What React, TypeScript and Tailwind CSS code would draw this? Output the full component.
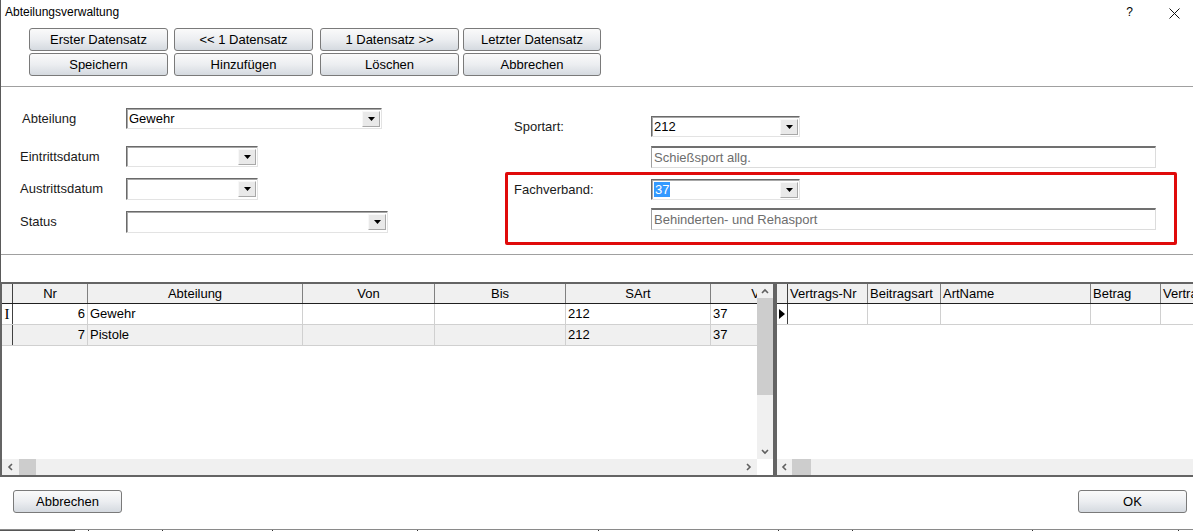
import React from "react";

function Btn({ children, className = "" }: { children: React.ReactNode; className?: string }) {
  return (
    <div
      className={`h-[23px] shrink-0 flex items-center justify-center border border-[#7a7a7a] rounded-[3px] bg-linear-to-b from-[#fafafa] via-[#eceef1] to-[#d5dae0] text-[13px] text-black ${className}`}
    >
      {children}
    </div>
  );
}

function Tri() {
  return (
    <svg width="7" height="4" viewBox="0 0 7 4">
      <polygon points="0,0 7,0 3.5,4" fill="#000" />
    </svg>
  );
}

function Combo({ w, h = "h-[21px]", children }: { w: string; h?: string; children?: React.ReactNode }) {
  return (
    <div
      className={`${w} ${h} shrink-0 flex items-center bg-white border border-t-[#6a6a6a] border-l-[#6a6a6a] border-r-[#e3e3e3] border-b-[#e3e3e3] shadow-[inset_1px_1px_0_#a8a8a8]`}
    >
      <div className="flex-1 pl-[2px] text-[13px] text-black leading-none flex items-center">{children}</div>
      <div className="w-[18px] h-[16px] mr-[1px] bg-[#e9e9e9] border border-t-[#f8f8f8] border-l-[#f8f8f8] border-r-[#a8a8a8] border-b-[#a8a8a8] flex items-center justify-center">
        <Tri />
      </div>
    </div>
  );
}

function Field({ children }: { children: React.ReactNode }) {
  return (
    <div className="w-[505px] h-[22px] flex items-center pl-[2px] text-[13px] text-[#6d6d6d] bg-white border-t-2 border-t-[#707070] border-l border-l-[#a0a0a0] border-r border-r-[#dcdcdc] border-b border-b-[#dcdcdc]">
      {children}
    </div>
  );
}

function Chev({ dir }: { dir: "up" | "down" | "left" | "right" }) {
  if (dir === "up" || dir === "down") {
    const pts = dir === "up" ? "1,5 4,2 7,5" : "1,2 4,5 7,2";
    return (
      <svg width="8" height="7" viewBox="0 0 8 7">
        <polyline points={pts} fill="none" stroke="#606060" strokeWidth="1.6" />
      </svg>
    );
  }
  const pts = dir === "left" ? "5,1 2,4 5,7" : "2,1 5,4 2,7";
  return (
    <svg width="7" height="8" viewBox="0 0 7 8">
      <polyline points={pts} fill="none" stroke="#606060" strokeWidth="1.6" />
    </svg>
  );
}

function HScroll({ className = "", thumbL = "w-[17px]", arrowL = "w-[17px]" }: { className?: string; thumbL?: string; arrowL?: string }) {
  return (
    <div className={`h-[16px] flex bg-[#f0f0f0] ${className}`}>
      <div className={`${arrowL} shrink-0 flex items-center justify-center`}>
        <Chev dir="left" />
      </div>
      <div className={`${thumbL} shrink-0 bg-[#cdcdcd]`} />
      <div className="flex-1" />
      <div className="w-[17px] shrink-0 flex items-center justify-center">
        <Chev dir="right" />
      </div>
    </div>
  );
}

export default function App() {
  const leftCols = [
    { w: "w-[75px]", label: "Nr" },
    { w: "w-[215px]", label: "Abteilung" },
    { w: "w-[132px]", label: "Von" },
    { w: "w-[131px]", label: "Bis" },
    { w: "w-[145px]", label: "SArt" },
    { w: "w-[90px]", label: "V" },
  ];
  const leftRows = [
    { nr: "6", ab: "Gewehr", sart: "212", v: "37", bg: "bg-white", ind: true },
    { nr: "7", ab: "Pistole", sart: "212", v: "37", bg: "bg-[#f0f0f0]", ind: false },
  ];
  const rightCols = [
    { w: "w-[80px]", label: "Vertrags-Nr" },
    { w: "w-[73px]", label: "Beitragsart" },
    { w: "w-[150px]", label: "ArtName" },
    { w: "w-[70px]", label: "Betrag" },
    { w: "w-[100px]", label: "Vertrag" },
  ];

  return (
    <div className="w-[1193px] h-[531px] bg-white flex flex-col overflow-hidden font-['Liberation_Sans',Arial,sans-serif] text-[13px] text-black">
      {/* upper area with left window border */}
      <div className="flex flex-col border-l border-[#5a5a5a]">
        {/* Title bar */}
        <div className="h-[28px] flex items-start justify-between">
          <div className="pl-[4px] pt-[4px] text-[12px] leading-[16px] text-black">Abteilungsverwaltung</div>
          <div className="flex items-start pt-[4px] pr-[13px]">
            <span className="text-[12px] leading-[16px] mr-[36px]">?</span>
            <svg width="11" height="11" viewBox="0 0 11 11" className="mt-[4px]">
              <line x1="0.5" y1="0.5" x2="10.5" y2="10.5" stroke="#111" strokeWidth="1" />
              <line x1="10.5" y1="0.5" x2="0.5" y2="10.5" stroke="#111" strokeWidth="1" />
            </svg>
          </div>
        </div>

        {/* Button block */}
        <div className="h-[59px] border-b border-[#a0a0a0] flex flex-col">
          <div className="flex ml-[28px]">
            <Btn className="w-[139px]">Erster Datensatz</Btn>
            <Btn className="w-[139px] ml-[6px]">&lt;&lt; 1 Datensatz</Btn>
            <Btn className="w-[139px] ml-[7px]">1 Datensatz &gt;&gt;</Btn>
            <Btn className="w-[138px] ml-[4px]">Letzter Datensatz</Btn>
          </div>
          <div className="flex ml-[28px] mt-[2px]">
            <Btn className="w-[139px]">Speichern</Btn>
            <Btn className="w-[139px] ml-[6px]">Hinzufügen</Btn>
            <Btn className="w-[139px] ml-[7px]">Löschen</Btn>
            <Btn className="w-[138px] ml-[4px]">Abbrechen</Btn>
          </div>
        </div>

        {/* Form */}
        <div className="h-[168px] border-b border-[#a0a0a0] flex">
          <div className="w-[504px] shrink-0 flex flex-col pt-[21px]">
            <div className="flex items-center h-[21px]">
              <div className="w-[125px] pl-[21px] text-[#1a1a1a]">Abteilung</div>
              <Combo w="w-[256px]">Gewehr</Combo>
            </div>
            <div className="flex items-center h-[21px] mt-[17px]">
              <div className="w-[125px] pl-[19px] text-[#1a1a1a]">Eintrittsdatum</div>
              <Combo w="w-[132px]" />
            </div>
            <div className="flex items-center h-[22px] mt-[11px]">
              <div className="w-[125px] pl-[19px] text-[#1a1a1a]">Austrittsdatum</div>
              <Combo w="w-[132px]" h="h-[22px]" />
            </div>
            <div className="flex items-center h-[22px] mt-[11px]">
              <div className="w-[125px] pl-[19px] text-[#1a1a1a]">Status</div>
              <Combo w="w-[262px]" h="h-[22px]" />
            </div>
          </div>

          <div className="flex flex-col">
            <div className="border-[3px] border-transparent pt-[26px] w-[672px]">
              <div className="flex items-center h-[21px]">
                <div className="w-[143px] pl-[6px] text-[#1a1a1a]">Sportart:</div>
                <Combo w="w-[149px]">212</Combo>
              </div>
              <div className="ml-[143px] mt-[9px]">
                <Field>Schießsport allg.</Field>
              </div>
            </div>
            <div className="mt-[1px] w-[672px] h-[73px] border-[3px] border-[#e00a0a] rounded-[2px] pt-[4px]">
              <div className="flex items-center h-[21px]">
                <div className="w-[143px] pl-[6px] text-[#1a1a1a]">Fachverband:</div>
                <Combo w="w-[149px]">
                  <span className="bg-[#3399ff] text-white px-[1px] leading-[15px]">37</span>
                </Combo>
              </div>
              <div className="ml-[143px] mt-[8px]">
                <Field>Behinderten- und Rehasport</Field>
              </div>
            </div>
          </div>
        </div>

        {/* spacer */}
        <div className="h-[27px]" />
      </div>

      {/* Grids */}
      <div className="h-[195px] flex shrink-0">
        {/* Left grid */}
        <div className="w-[775px] shrink-0 border-2 border-[#646464] flex flex-col">
          <div className="h-[175px] flex">
            <div className="w-[755px] overflow-hidden flex flex-col bg-white">
              <div className="h-[20px] flex border-b border-[#202020] bg-[#f0f0f0] shrink-0">
                <div className="w-[11px] shrink-0 border-r border-[#404040]" />
                {leftCols.map((c) => (
                  <div key={c.label} className={`${c.w} shrink-0 border-r border-[#808080] flex items-center justify-center`}>
                    {c.label}
                  </div>
                ))}
              </div>
              {leftRows.map((r) => (
                <div key={r.nr} className={`h-[21px] flex border-b border-[#d0d0d0] shrink-0 ${r.bg}`}>
                  <div className="w-[11px] shrink-0 border-r border-[#404040] flex items-center justify-center font-['Liberation_Serif',serif] text-[15px] leading-none text-black">
                    {r.ind ? "I" : ""}
                  </div>
                  <div className="w-[75px] shrink-0 border-r border-[#d0d0d0] flex items-center justify-end pr-[2px]">{r.nr}</div>
                  <div className="w-[215px] shrink-0 border-r border-[#d0d0d0] flex items-center pl-[2px]">{r.ab}</div>
                  <div className="w-[132px] shrink-0 border-r border-[#d0d0d0]" />
                  <div className="w-[131px] shrink-0 border-r border-[#d0d0d0]" />
                  <div className="w-[145px] shrink-0 border-r border-[#d0d0d0] flex items-center pl-[2px]">{r.sart}</div>
                  <div className="w-[90px] shrink-0 flex items-center pl-[2px]">{r.v}</div>
                </div>
              ))}
            </div>
            <div className="w-[16px] shrink-0 bg-[#f0f0f0] flex flex-col">
              <div className="h-[14px] flex items-center justify-center">
                <Chev dir="up" />
              </div>
              <div className="h-[97px] bg-[#cdcdcd]" />
              <div className="flex-1" />
              <div className="h-[15px] flex items-center justify-center">
                <Chev dir="down" />
              </div>
            </div>
          </div>
          <div className="h-[16px] flex">
            <HScroll className="w-[755px]" />
            <div className="w-[16px] bg-white" />
          </div>
        </div>

        {/* Right grid */}
        <div className="flex-1 border-t-2 border-b-2 border-l-2 border-[#646464] flex flex-col">
          <div className="flex-1 overflow-hidden flex flex-col bg-white">
            <div className="h-[20px] flex border-b border-[#202020] bg-[#f0f0f0] shrink-0">
              <div className="w-[11px] shrink-0 border-r border-[#404040]" />
              {rightCols.map((c) => (
                <div key={c.label} className={`${c.w} shrink-0 border-r border-[#808080] flex items-center pl-[2px] whitespace-nowrap overflow-hidden`}>
                  {c.label}
                </div>
              ))}
            </div>
            <div className="h-[21px] flex border-b border-[#d0d0d0] shrink-0">
              <div className="w-[11px] shrink-0 border-r border-[#404040] flex items-center justify-center">
                <svg width="6" height="10" viewBox="0 0 6 10">
                  <polygon points="0,0 6,5 0,10" fill="#000" />
                </svg>
              </div>
              <div className="w-[80px] shrink-0 border-r border-[#d0d0d0]" />
              <div className="w-[73px] shrink-0 border-r border-[#d0d0d0]" />
              <div className="w-[150px] shrink-0 border-r border-[#d0d0d0]" />
              <div className="w-[70px] shrink-0 border-r border-[#d0d0d0]" />
              <div className="w-[100px] shrink-0" />
            </div>
          </div>
          <HScroll thumbL="w-[19px]" arrowL="w-[15px]" />
        </div>
      </div>

      {/* Bottom buttons */}
      <div className="h-[52px] flex items-start justify-between pt-[13px] pl-[13px] pr-[6px] shrink-0">
        <Btn className="w-[109px]">Abbrechen</Btn>
        <Btn className="w-[109px]">OK</Btn>
      </div>

      {/* bottom edge */}
      <div className="h-[2px] flex border-t border-[#8a8a8a] shrink-0">
        <div className="w-[74px] bg-[#555]" />
        <div className="w-[14px] border-l border-[#333]" />
        <div className="w-[74px] border-l border-[#333]" />
        <div className="w-[110px] border-l border-[#333]" />
        <div className="w-[145px] border-l border-[#333]" />
        <div className="w-[181px] border-l border-[#333]" />
        <div className="w-[180px] border-l border-[#333]" />
        <div className="w-[74px] border-l border-[#333]" />
        <div className="w-[180px] border-l border-[#333]" />
        <div className="w-[146px] border-l border-[#333]" />
        <div className="flex-1 border-l border-[#333]" />
      </div>
    </div>
  );
}
